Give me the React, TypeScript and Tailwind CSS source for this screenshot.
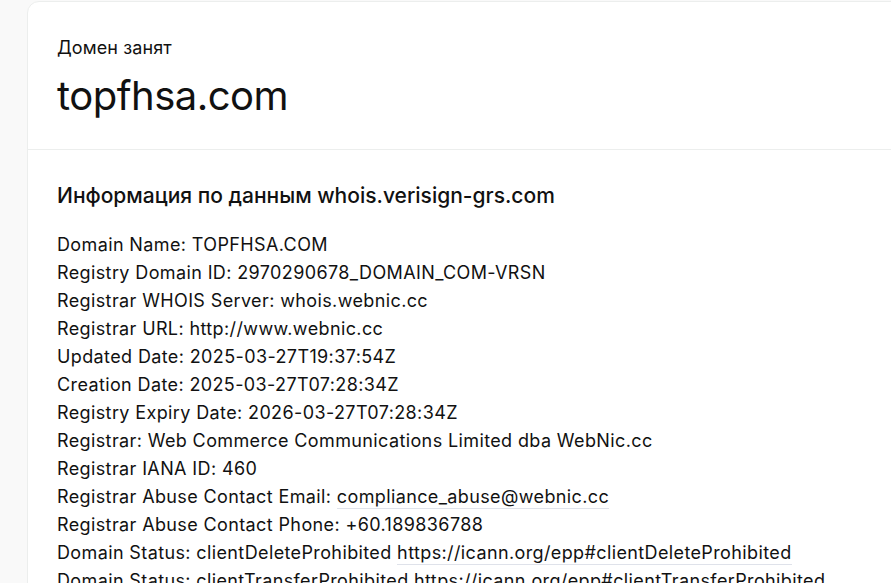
import React from "react";

const lines: { label: string; value: string; link?: string }[] = [
  { label: "Domain Name:", value: "TOPFHSA.COM" },
  { label: "Registry Domain ID:", value: "2970290678_DOMAIN_COM-VRSN" },
  { label: "Registrar WHOIS Server:", value: "whois.webnic.cc" },
  { label: "Registrar URL:", value: "http://www.webnic.cc" },
  { label: "Updated Date:", value: "2025-03-27T19:37:54Z" },
  { label: "Creation Date:", value: "2025-03-27T07:28:34Z" },
  { label: "Registry Expiry Date:", value: "2026-03-27T07:28:34Z" },
  { label: "Registrar:", value: "Web Commerce Communications Limited dba WebNic.cc" },
  { label: "Registrar IANA ID:", value: "460" },
  { label: "Registrar Abuse Contact Email:", value: "", link: "compliance_abuse@webnic.cc" },
  { label: "Registrar Abuse Contact Phone:", value: "+60.189836788" },
  {
    label: "Domain Status:",
    value: "clientDeleteProhibited",
    link: "https://icann.org/epp#clientDeleteProhibited",
  },
  {
    label: "Domain Status:",
    value: "clientTransferProhibited",
    link: "https://icann.org/epp#clientTransferProhibited",
  },
];

const App: React.FC = () => {
  return (
    <div className="h-screen bg-[#f9f9f9] pl-[27px] pt-px text-[#111] overflow-hidden font-['Inter','Noto_Sans',sans-serif]">
      {/* Card */}
      <div className="w-[900px] bg-white border border-[#eceeed] rounded-tl-[12px] min-h-[620px]">
        {/* Header */}
        <div className="pl-[29px] pt-[33px] pb-[29px] border-b border-[#eceeed]">
          <div className="text-[18px] leading-[26px] tracking-[0.1px]">Домен занят</div>
          <h1 className="mt-[11px] text-[40px] leading-[48px] tracking-[-0.5px]">topfhsa.com</h1>
        </div>

        {/* Whois info */}
        <div className="pl-[29px] pt-[31px]">
          <h2 className="text-[21px] leading-[30px] font-medium">
            Информация по данным whois.verisign-grs.com
          </h2>
          <div className="mt-[20px] text-[18px] leading-[28px] tracking-[0.38px]">
            {lines.map((l, i) => (
              <div key={i} className="whitespace-nowrap">
                {l.label} {l.value}
                {l.value && l.link ? " " : ""}
                {l.link && (
                  <a href="#" className="border-b border-[#dfe2ea] pb-px">
                    {l.link}
                  </a>
                )}
              </div>
            ))}
          </div>
        </div>
      </div>
    </div>
  );
};

export default App;
